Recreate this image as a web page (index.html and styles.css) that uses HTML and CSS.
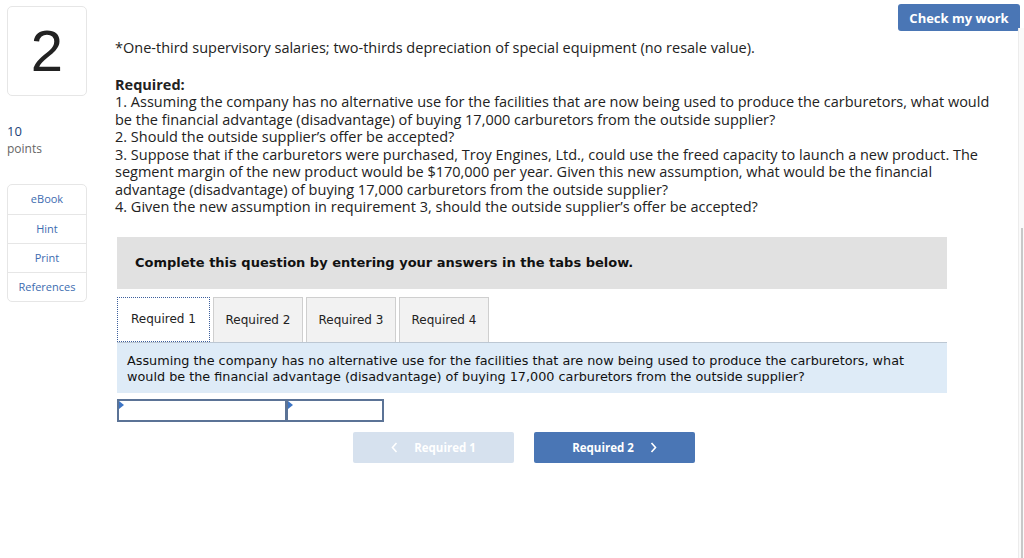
FILE: index.html
```html
<!DOCTYPE html>
<html>
<head>
<meta charset="utf-8">
<link rel="stylesheet" href="styles.css">
</head>
<body>
<div class="page">
  <aside class="side">
    <div class="qnum">2</div>
    <div class="pts"><div class="pts-n">10</div><div class="pts-l">points</div></div>
    <ul class="links">
      <li>eBook</li>
      <li>Hint</li>
      <li>Print</li>
      <li>References</li>
    </ul>
  </aside>
  <main class="main">
    <div class="topbar"><button class="check">Check my work</button></div>
    <p class="note">*One-third supervisory salaries; two-thirds depreciation of special equipment (no resale value).</p>
    <div class="req">
      <div class="req-h">Required:</div>
      <div>1. Assuming the company has no alternative use for the facilities that are now being used to produce the carburetors, what would be the financial advantage (disadvantage) of buying 17,000 carburetors from the outside supplier?</div>
      <div>2. Should the outside supplier’s offer be accepted?</div>
      <div>3. Suppose that if the carburetors were purchased, Troy Engines, Ltd., could use the freed capacity to launch a new product. The segment margin of the new product would be $170,000 per year. Given this new assumption, what would be the financial advantage (disadvantage) of buying 17,000 carburetors from the outside supplier?</div>
      <div>4. Given the new assumption in requirement 3, should the outside supplier’s offer be accepted?</div>
    </div>
    <div class="work">
      <div class="banner">Complete this question by entering your answers in the tabs below.</div>
      <div class="tabs">
        <div class="tab active">Required 1</div>
        <div class="tab">Required 2</div>
        <div class="tab">Required 3</div>
        <div class="tab">Required 4</div>
      </div>
      <div class="prompt">Assuming the company has no alternative use for the facilities that are now being used to produce the carburetors, what would be the financial advantage (disadvantage) of buying 17,000 carburetors from the outside supplier?</div>
      <div class="inputs">
        <div class="inp wide"></div>
        <div class="inp narrow"></div>
      </div>
      <div class="nav">
        <button class="navbtn prev"><svg class="chev" width="7" height="11" viewBox="0 0 7 11"><path d="M5.5 1 L1.5 5.5 L5.5 10" fill="none" stroke="#fff" stroke-width="1.6"/></svg><span>Required 1</span></button>
        <button class="navbtn next"><span>Required 2</span><svg class="chev" width="7" height="11" viewBox="0 0 7 11"><path d="M1.5 1 L5.5 5.5 L1.5 10" fill="none" stroke="#fff" stroke-width="1.6"/></svg></button>
      </div>
    </div>
  </main>
  <div class="edge"></div>
</div>
</body>
</html>
```

FILE: styles.css
```css
* { box-sizing: border-box; }
html, body { margin: 0; padding: 0; background: #fff; }
body { font-family: "Open Sans", "Liberation Sans", sans-serif; color: #222; width: 1024px; height: 558px; overflow: hidden; }
.page { display: flex; height: 558px; position: relative; }
.side { width: 115px; padding: 6px 0 0 7px; flex: none; }
.qnum { width: 80px; height: 90px; border: 1px solid #e6e6e6; border-radius: 5px; display: flex; align-items: center; justify-content: center; font-family: "Liberation Sans", sans-serif; font-size: 58px; color: #222; line-height: 1; }
.pts { margin-top: 27px; }
.pts-n { font-size: 13px; color: #1d3f78; line-height: 17px; }
.pts-l { font-size: 12px; color: #666; line-height: 17px; }
.links { list-style: none; margin: 27px 0 0; padding: 0; width: 80px; border: 1px solid #e6e6e6; border-radius: 5px; }
.links li { height: 29px; line-height: 28px; text-align: center; font-size: 11px; color: #3d6cb0; border-top: 1px solid #e6e6e6; }
.links li:first-child { border-top: 0; }
.main { flex: 1; position: relative; padding-top: 39px; }
.topbar { position: absolute; top: 4px; right: 4px; }
.check { background: #4a76b5; color: #fff; border: 0; border-radius: 3px; font-family: "Open Sans", sans-serif; font-weight: 700; font-size: 13px; width: 122px; height: 27px; padding: 0; }
.note { margin: 0; font-size: 14.5px; line-height: 17.5px; width: 890px; }
.req { margin-top: 19px; font-size: 14.5px; line-height: 17.5px; width: 890px; }
.req-h { font-weight: 700; }
.work { margin-top: 21px; margin-left: 2px; width: 830px; font-family: "DejaVu Sans", Verdana, sans-serif; }
.banner { background: #e1e1e1; height: 52px; padding-left: 18px; display: flex; align-items: center; font-weight: 700; font-size: 13px; color: #111; }
.tabs { display: flex; gap: 3px; margin-top: 8px; height: 45px; }
.tab { width: 90px; background: #f2f2f2; border: 1px solid #cfcfcf; border-bottom: 0; font-size: 12px; display: flex; align-items: center; justify-content: center; color: #222; }
.tab.active { width: 93px; background: #fff; border: 1px dotted #3d5f9c; }
.prompt { background: #deebf7; border-top: 1px solid #bcc7d3; padding: 10px 10px 8px; font-size: 12.8px; line-height: 16px; color: #111; height: 51px; }
.inputs { display: flex; margin-top: 6px; }
.inp { height: 23px; border: 2px solid #5b7396; position: relative; background: #fff; }
.inp::before { content: ""; position: absolute; left: 0; top: 0; border-left: 5px solid #3d75c5; border-top: 4px solid transparent; border-bottom: 4px solid transparent; }
.wide { width: 170px; }
.narrow { width: 98px; margin-left: -1px; }
.nav { display: flex; justify-content: center; gap: 20px; margin-top: 10px; padding-right: 16px; }
.navbtn { width: 161px; height: 31px; border: 0; border-radius: 2px; color: #fff; font-family: "Open Sans", sans-serif; font-weight: 700; font-size: 11.5px; padding: 0; display: flex; align-items: center; justify-content: center; gap: 16px; }
.prev { background: #d6e1ee; }
.next { background: #4a76b5; }
.edge { position: absolute; right: 0; top: 28px; bottom: 0; width: 6px; border-left: 1px solid #ececec; background: #fafafa; }
.edge::after { content: ""; position: absolute; right: 1px; top: 200px; bottom: 0; width: 2px; background: #c8c8c8; }
```
